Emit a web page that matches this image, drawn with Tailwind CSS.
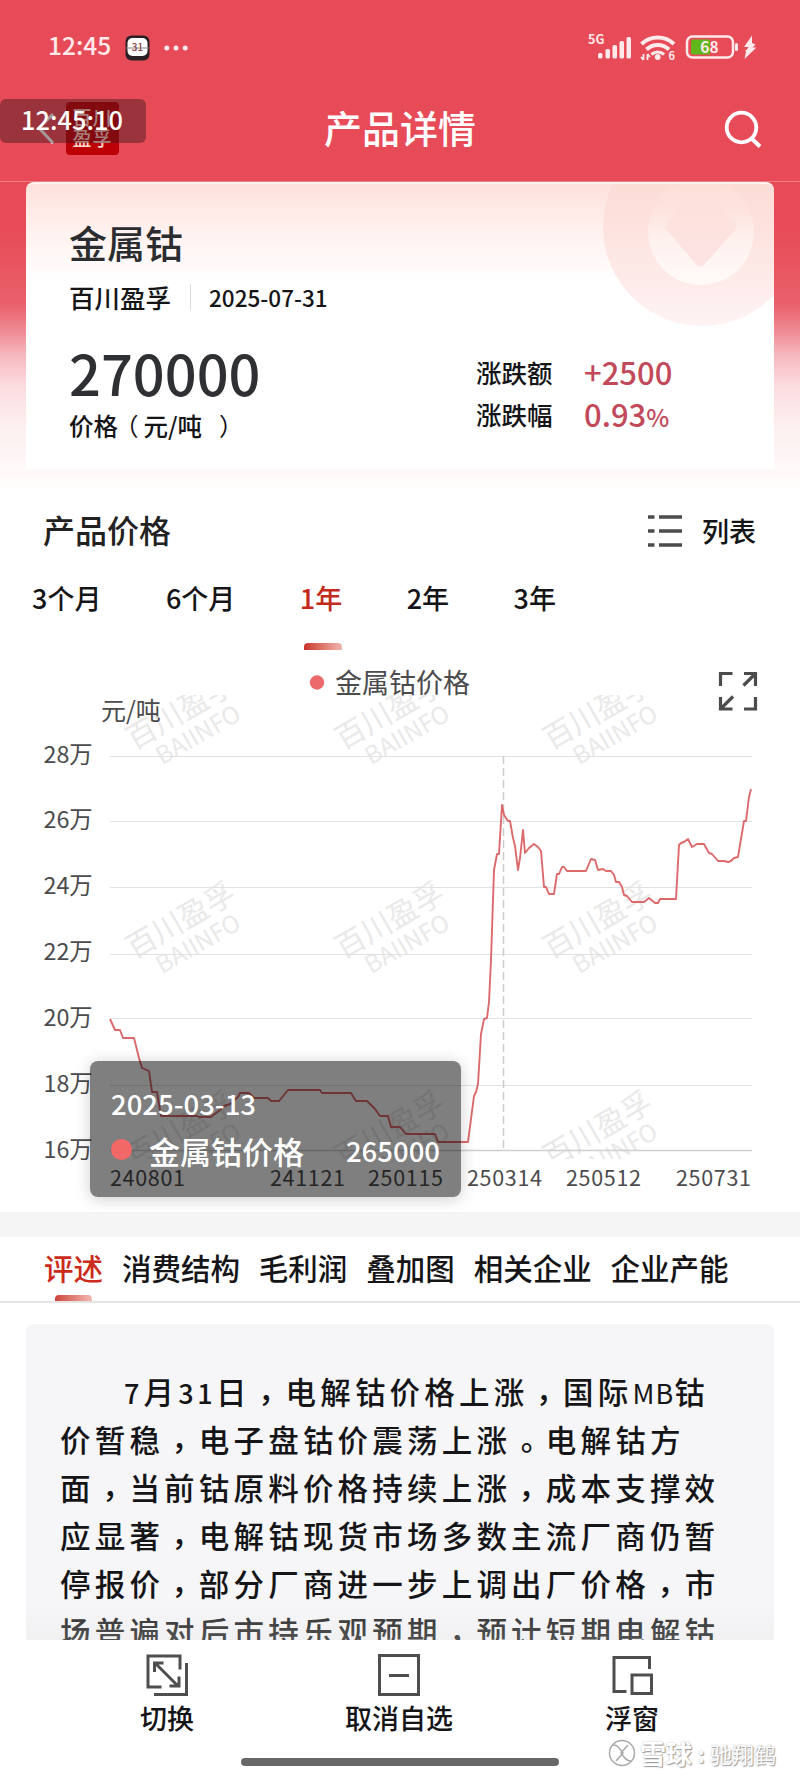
<!DOCTYPE html>
<html lang="zh-CN">
  <head>
    <meta charset="UTF-8" />
    <meta name="viewport" content="width=device-width, initial-scale=1.0" />
    <title>产品详情</title>
    <script src="https://cdn.jsdelivr.net/npm/@tailwindcss/browser@4"></script>
  </head>
  <body class="bg-white">
    <div
      class="relative flex flex-col w-[800px] h-[1778px] overflow-hidden bg-white text-[#151518] font-medium whitespace-nowrap font-['Noto_Sans_CJK_SC',sans-serif] [text-spacing-trim:space-all]"
    >
      <!-- Header -->
      <header class="relative h-[181px] shrink-0 bg-[#e74b57] text-white">
        <div class="flex items-center h-[92px] pl-12 pr-[41px]">
          <span class="text-[24.500px] leading-[89px] h-[92px] text-[#ffe9ea] w-[77px]">12:45</span>
          <svg class="w-[25px] h-[26px] mt-1" viewBox="0 0 25 26">
            <rect x="0.5" y="0.5" width="24" height="25" rx="6" fill="#2a2023" />
            <rect x="2.5" y="3" width="20" height="18" rx="5" fill="#fff" />
            <path d="M1 13h23" stroke="#888" />
            <text x="12.5" y="16" font-size="10" text-anchor="middle" fill="#844">31</text>
          </svg>
          <svg class="w-6 h-5 ml-3.5 mt-1" viewBox="0 0 24 20" fill="#ffe9ea">
            <circle cx="2.8" cy="10" r="2.5" />
            <circle cx="12" cy="10" r="2.5" />
            <circle cx="21.200" cy="10" r="2.500" />
          </svg>
          <svg class="w-[172px] h-[34px] ml-auto" viewBox="587 29 172 34" fill="#ffe9ea">
            <text x="588" y="43.500" font-size="12.500" font-weight="700">5G</text>
            <rect x="598" y="53" width="4.500" height="5.500" rx="1.500" />
            <rect x="605.500" y="49" width="4.500" height="9.500" rx="1.500" />
            <rect x="612.500" y="45" width="4.500" height="13.500" rx="1.500" />
            <rect x="619.500" y="41" width="4.500" height="17.500" rx="1.500" />
            <rect x="626.500" y="37" width="4.500" height="21.500" rx="1.500" />
            <g fill="none" stroke="#ffe9ea" stroke-width="4">
              <path d="M641.500 44a23.500 23.500 0 0 1 32.500 0" />
              <path d="M646.500 49.500a16 16 0 0 1 22.500 0" />
              <path d="M651.500 54.500a9 9 0 0 1 12.500 0" stroke-width="3.200" />
            </g>
            <circle cx="657.700" cy="57" r="2.900" />
            <path d="M643.500 54v6M641 57l2.500 3M647.500 60v-6M650 57l-2.500-3" stroke="#ffe9ea" stroke-width="1.800" />
            <text x="668.500" y="59.500" font-size="11" font-weight="700">6</text>
            <rect x="687" y="36.500" width="46" height="21" rx="5.500" fill="none" stroke="#ffe9ea" stroke-width="2.500" />
            <path d="M691 41.500a2 2 0 0 1 2-2h17v15h-17a2 2 0 0 1-2-2z" fill="#5fb71c" />
            <rect x="735" y="43" width="3" height="8" rx="1.500" />
            <text x="709.500" y="52.500" font-size="15.500" font-weight="700" text-anchor="middle">68</text>
            <path d="M752 35.500l-8 11.500h4.500l-2 3h-1.500l1 1.500-1.500 7.500 12-11.500h-4l3-3-3.500-1.500z" />
          </svg>
        </div>
        <div class="relative flex items-center justify-center h-[75px]">
          <svg class="absolute left-9 top-[20px] w-5 h-8" viewBox="0 0 20 32" fill="none" stroke="#fff" stroke-width="3">
            <path d="M17 2L3 16l14 15" />
          </svg>
          <div
            class="absolute left-[66px] top-[10px] w-[53px] h-[53px] rounded-sm bg-[#bd0006] text-[#ffd8d0] text-[19px] leading-[21px] pt-[4px] text-center tracking-[1px]"
          >
            百川<br />盈孚
          </div>
          <div class="absolute left-0 top-[7px] w-[146px] h-[44px] rounded-md bg-[#3b161a]/45"></div>
          <span class="absolute left-[21px] top-[7px] text-[25.400px] leading-[41px]">12:45:10</span>
          <h1 class="text-[38px] leading-[69px] h-[75px]">产品详情</h1>
          <svg class="absolute right-[38px] top-[18px] w-[38px] h-[40px]" viewBox="0 0 38 40" fill="none" stroke="#fff" stroke-width="3.800">
            <circle cx="17.500" cy="17.500" r="14.800" />
            <path d="M27.500 28.500l8.500 8" stroke-width="4" />
          </svg>
        </div>
      </header>

      <!-- Summary card -->
      <section
        class="h-[308px] shrink-0 px-[26px] border-t border-[#ee7d85] bg-[linear-gradient(#e74b57_15%,#e9606b_40%,#ef8d96_49%,#f6b6bd_56%,#fbdbdf_66%,#fdf0f0_80%,#fffdfc)]"
      >
        <div
          class="relative h-[287px] rounded-t-lg overflow-hidden border-t-2 border-[#fff3ef] bg-linear-to-b from-[#fde2dc] via-[#fff2f0] via-18% to-white to-34% px-[43px]"
        >
          <svg class="absolute right-0 top-0 w-[180px] h-[150px]" viewBox="594 183 180 150">
            <defs>
              <linearGradient id="ring" gradientUnits="userSpaceOnUse" x1="0" y1="183" x2="0" y2="325">
                <stop offset="0" stop-color="#fddcd6" />
                <stop offset="0.350" stop-color="#fde3df" />
                <stop offset="1" stop-color="#fef3f4" />
              </linearGradient>
              <linearGradient id="disc" gradientUnits="userSpaceOnUse" x1="0" y1="183" x2="0" y2="284">
                <stop offset="0" stop-color="#fddfd8" />
                <stop offset="0.250" stop-color="#fde3dd" />
                <stop offset="0.550" stop-color="#fef1ee" />
                <stop offset="1" stop-color="#fffaf9" />
              </linearGradient>
              <linearGradient id="gem" gradientUnits="userSpaceOnUse" x1="0" y1="183" x2="0" y2="265">
                <stop offset="0" stop-color="#fddfd8" />
                <stop offset="0.350" stop-color="#fde2dc" />
                <stop offset="1" stop-color="#fce4e4" />
              </linearGradient>
            </defs>
            <circle cx="702" cy="226" r="99" fill="url(#ring)" />
            <circle cx="701" cy="231" r="53" fill="url(#disc)" />
            <path d="M665 227q0-5 6-10l14-14h32l15 14q7 6 2 13l-29 33q-5 5-9 0z" fill="url(#gem)" />
          </svg>
          <h2 class="pt-[31px] text-[38px] leading-[54px] text-[#2b2c2f]">金属钴</h2>
          <div class="flex items-center h-[56px] text-[25.500px] leading-[58px]">
            <span>百川盈孚</span>
            <span class="w-px h-[26px] ml-[19px] mr-[18px] bg-[#ddd]"></span>
            <span class="text-[22.500px]">2025-07-31</span>
          </div>
          <div class="flex justify-between pr-[51px]">
            <div>
              <div class="text-[56px] leading-[94px] h-[83px] text-[#2f3033]">270000</div>
              <div class="text-[24.500px] leading-[35px]">价格<span class="-ml-[4px] font-normal">（</span><span class="ml-[5px]">元/吨</span><span class="ml-[17px] font-normal">）</span></div>
            </div>
            <div class="w-[204px] pt-[26px] text-[25.500px]">
              <div class="flex h-[42px] leading-[42px]">
                <span class="w-[108px]">涨跌额</span>
                <span class="text-[31px] text-[#c2495a]">+2500</span>
              </div>
              <div class="flex h-[42px] leading-[42px]">
                <span class="w-[108px]">涨跌幅</span>
                <span class="text-[31px] text-[#c2495a]">0.93<span class="text-[24.500px]">%</span></span>
              </div>
            </div>
          </div>
        </div>
      </section>

      <!-- Price heading and period tabs -->
      <section class="h-[171px] shrink-0">
        <div class="flex items-center h-[83px] pl-[43px] pr-[44px]">
          <h3 class="text-[32px] leading-[81px] h-[83px] text-[#222]">产品价格</h3>
          <svg class="ml-auto w-[34px] h-[34px]" viewBox="0 0 34 34" stroke="#4c4c4c" stroke-width="3.300">
            <path d="M0 3h6.500M11 3h23M0 17h6.500M11 17h23M0 31h6.500M11 31h23" />
          </svg>
          <span class="ml-[20px] text-[27px] leading-[83px]">列表</span>
        </div>
        <div class="flex gap-[64.500px] pl-[32px] text-[27px] leading-[52px]">
          <span>3个月</span>
          <span>6个月</span>
          <span class="relative text-[#c42a1c]">
            1年
            <i class="absolute left-[4px] top-[71px] w-[38px] h-[7px] rounded-t bg-linear-to-r from-[#c93128] to-[#efb5ae]"></i>
          </span>
          <span>2年</span>
          <span>3年</span>
        </div>
      </section>

      <!-- Chart -->
      <section class="relative h-[552px] shrink-0">
        <svg class="block w-[800px] h-[552px]" viewBox="0 660 800 552" fill="none">
          <defs>
            <clipPath id="plot"><rect x="100" y="695" width="660" height="464" /></clipPath>
            <g id="mark" fill="#e9e9e9" transform="rotate(-30)">
              <text x="-14" y="12" font-size="30" font-weight="400">百川盈孚</text>
              <text x="3" y="39" font-size="24" font-weight="400" textLength="93">BAIINFO</text>
            </g>
          </defs>
          <g clip-path="url(#plot)">
            <use href="#mark" transform="translate(140 733)" />
            <use href="#mark" transform="translate(349 733)" />
            <use href="#mark" transform="translate(557 733)" />
            <use href="#mark" transform="translate(140 942)" />
            <use href="#mark" transform="translate(349 942)" />
            <use href="#mark" transform="translate(557 942)" />
            <use href="#mark" transform="translate(140 1151)" />
            <use href="#mark" transform="translate(349 1151)" />
            <use href="#mark" transform="translate(557 1151)" />
          </g>
          <path
            d="M110 756.500h642M110 821.500h642M110 887.500h642M110 954.500h642M110 1018.500h642M110 1085.500h642"
            stroke="#dfe2e5"
            stroke-width="1.200"
          />
          <path d="M110 1150.500h642" stroke="#cfcfd2" stroke-width="1.500" />
          <path d="M503.500 756v394" stroke="#ccc" stroke-width="1.500" stroke-dasharray="8 4" />
          <polyline
            stroke="#dc6a6c"
            stroke-width="1.900"
            stroke-linejoin="round"
            points="110,1019 115,1030 120,1030 123,1038 134,1038 139,1058 142,1068 149,1071 152,1092 157,1092 161,1116 197,1116 199,1117 211,1117 221,1109 224,1106 230,1104 238,1097 240,1093 249,1093 254,1098 268,1098 271,1101 279,1101 288,1090 320,1090 322,1093 351,1093 356,1101 367,1101 375,1109 380,1116 388,1116 391,1127 400,1127 406,1134 435,1134 438,1142 468,1142 474,1096 476,1092 478,1084 481,1034 484,1019 487,1018 489,1002 491,960 494,870 497,854 499,854 502,805 504,815 508,821 510,821 513,838 515,846 518,870 520,858 523,830 525,853 529,848 534,844 538,847 541,851 544,887 546,887 549,894 554,894 557,874 559,874 562,867 564,867 567,871 586,871 591,859 595,860 598,870 603,869 606,871 611,871 614,875 616,882 619,882 622,887 624,895 627,896 632,902 644,902 649,898 655,903 658,903 660,899 676,899 679,845 681,843 684,842 688,839 692,847 697,844 704,844 709,853 712,854 718,861 724,861 728,862 731,861 734,858 738,857 744,821 746,821 749,797 751,789"
          />
          <circle cx="317" cy="682.500" r="7.200" fill="#ec6a6c" />
          <g fill="#4b4b4d" font-weight="400">
            <text x="335" y="693" font-size="27">金属钴价格</text>
            <text x="101" y="720" font-size="25">元/吨</text>
            <g font-size="23.300">
              <text x="43.500" y="762.500">28万</text>
              <text x="43.500" y="828">26万</text>
              <text x="43.500" y="894">24万</text>
              <text x="43.500" y="960">22万</text>
              <text x="43.500" y="1026">20万</text>
              <text x="43.500" y="1092">18万</text>
              <text x="43.500" y="1158">16万</text>
            </g>
            <g font-size="21.500">
              <text x="110" y="1186" textLength="75">240801</text>
              <text x="270" y="1186" textLength="75">241121</text>
              <text x="368" y="1186" textLength="75">250115</text>
              <text x="467" y="1186" textLength="75">250314</text>
              <text x="566" y="1186" textLength="75">250512</text>
              <text x="676" y="1186" textLength="75">250731</text>
            </g>
          </g>
          <path
            d="M720.500 686v-12.500H732.500M744 673.500h11.500V686M755.500 673.500l-12 12M720.500 697v12H732.500M720.500 709l12.500-12.500M755.500 697v12H744"
            stroke="#4c4c4c"
            stroke-width="3.200"
          />
        </svg>
        <!-- Tooltip -->
        <div
          class="absolute left-[90px] top-[401px] w-[371px] h-[136px] rounded-lg bg-black/50 shadow-[0_2px_16px_rgba(0,0,0,0.200)] text-white pl-[21px] pr-[21px] pt-[17px]"
        >
          <div class="text-[27.500px] leading-[50px]">2025-03-13</div>
          <div class="flex items-center h-[46px]">
            <i class="w-[21px] h-[21px] -mt-1 rounded-full bg-[#f26866]"></i>
            <span class="ml-[17px] text-[31px] leading-[46px]">金属钴价格</span>
            <span class="ml-auto text-[27.500px] leading-[44px] h-[46px]">265000</span>
          </div>
        </div>
      </section>

      <div class="h-[25px] shrink-0 bg-[#f5f5f5]"></div>

      <!-- Section tabs -->
      <nav class="flex gap-[18.900px] h-[66px] shrink-0 pl-[44px] border-b-2 border-[#e4e4e4] text-[29.500px] leading-[60px]">
        <span class="relative text-[#cc2a1a]">
          评述
          <i class="absolute left-[11px] bottom-0 w-[37px] h-[6px] rounded-t bg-linear-to-r from-[#cb4038] to-[#f0b9b3]"></i>
        </span>
        <span>消费结构</span>
        <span>毛利润</span>
        <span>叠加图</span>
        <span>相关企业</span>
        <span>企业产能</span>
      </nav>

      <!-- Commentary -->
      <section class="relative h-[337px] shrink-0 pt-[21px] px-[26px] overflow-hidden">
        <div
          class="h-[400px] rounded-lg bg-[#f6f6f8] pt-[43px] pl-[34px] text-[30.500px] leading-[48px] tracking-[4.200px]"
        >
          <p class="h-[48px] pl-[64px]"><span class="text-[27px]">7</span>月<span class="text-[27px] tracking-[3.500px]">31</span>日<span lang="zh-TW" class="align-[-7px] leading-none font-['Noto_Sans_CJK_TC']">，</span>电解钴价格上涨<span lang="zh-TW" class="align-[-7px] leading-none font-['Noto_Sans_CJK_TC']">，</span>国际<span class="text-[27px] font-normal tracking-[1px]">MB</span>钴</p>
          <p class="h-[48px]">价暂稳<span lang="zh-TW" class="align-[-7px] leading-none font-['Noto_Sans_CJK_TC']">，</span>电子盘钴价震荡上涨<span lang="zh-TW" class="align-[-7px] leading-none font-['Noto_Sans_CJK_TC']">。</span>电解钴方</p>
          <p class="h-[48px]">面<span lang="zh-TW" class="align-[-7px] leading-none font-['Noto_Sans_CJK_TC']">，</span>当前钴原料价格持续上涨<span lang="zh-TW" class="align-[-7px] leading-none font-['Noto_Sans_CJK_TC']">，</span>成本支撑效</p>
          <p class="h-[48px]">应显著<span lang="zh-TW" class="align-[-7px] leading-none font-['Noto_Sans_CJK_TC']">，</span>电解钴现货市场多数主流厂商仍暂</p>
          <p class="h-[48px]">停报价<span lang="zh-TW" class="align-[-7px] leading-none font-['Noto_Sans_CJK_TC']">，</span>部分厂商进一步上调出厂价格<span lang="zh-TW" class="align-[-7px] leading-none font-['Noto_Sans_CJK_TC']">，</span>市</p>
          <p class="h-[48px] text-[#2e2e2e]">场普遍对后市持乐观预期<span lang="zh-TW" class="align-[-7px] leading-none font-['Noto_Sans_CJK_TC']">，</span>预计短期电解钴</p>
        </div>
        <div class="absolute inset-x-[26px] bottom-0 h-[36px] bg-linear-to-b from-transparent to-[#dcdcdc]/20"></div>
      </section>

      <!-- Bottom actions -->
      <footer class="relative flex-1 bg-white text-[27px] leading-[44px]">
        <div class="grid grid-cols-[334px_130px_336px] justify-items-center pt-[14px]">
          <div class="flex flex-col items-center">
            <svg class="w-[42px] h-[42px]" viewBox="0 0 42 42" fill="none" stroke="#4e4e4e" stroke-width="3">
              <path d="M15.500 33H2V2h32v13.500M8 40.500h32.500V9M9.500 9.500l22.500 22.500M8.500 18V9h9M33 22.500V32h-9.500" />
            </svg>
            <span>切换</span>
          </div>
          <div class="flex flex-col items-center">
            <svg class="w-[42px] h-[42px]" viewBox="0 0 42 42" fill="none" stroke="#4e4e4e" stroke-width="3">
              <path d="M1.500 1.500h39v39H1.500zM11 21.500h20" />
            </svg>
            <span>取消自选</span>
          </div>
          <div class="flex flex-col items-center">
            <svg class="w-[42px] h-[42px]" viewBox="0 0 42 42" fill="none" stroke="#4e4e4e" stroke-width="3">
              <path d="M15.500 37.500H3v-34h35.500V15M21 21h19.500v18.500H21z" />
            </svg>
            <span>浮窗</span>
          </div>
        </div>
        <div class="absolute left-[241px] top-[118px] w-[318px] h-[8px] rounded-full bg-[#686868]"></div>
        <div
          class="absolute left-[608px] top-[98px] flex items-center h-[30px] text-white text-[22px] leading-[30px] font-bold [text-shadow:1px_1px_1px_#999,0_0_2px_#bbb]"
        >
          <svg class="w-[28px] h-[28px] mr-1" viewBox="0 0 28 28" fill="none" stroke="#aaa" stroke-width="1.500">
            <circle cx="14" cy="14" r="12.500" />
            <path d="M5 6q4 0 7 4l3 4-7 8M23 22q-4 0-7-4l-3-4 7-8" />
          </svg>
          <span class="text-[26px]">雪球</span><span class="w-[18px] text-center">:</span><span class="font-normal">驰翔鹤</span>
        </div>
      </footer>
    </div>
  </body>
</html>
